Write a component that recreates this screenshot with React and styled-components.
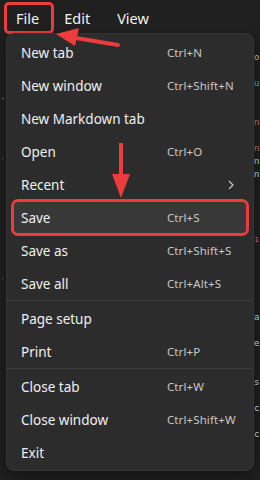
import React from "react";
import styled, { createGlobalStyle } from "styled-components";

const GlobalStyle = createGlobalStyle`
  html, body {
    margin: 0;
    padding: 0;
    background: #1f1f1f;
  }
  body {
    font-family: "Noto Sans", "Open Sans", sans-serif;
  }
`;

const Page = styled.div`
  position: relative;
  width: 260px;
  height: 480px;
  overflow: hidden;
  background: #1f1f1f;
`;

const TopBar = styled.div`
  display: flex;
  align-items: center;
  height: 33px;
  padding-left: 4px;
  background: #202020;
  box-sizing: border-box;
`;

const Tab = styled.div`
  box-sizing: border-box;
  height: 32px;
  display: flex;
  align-items: center;
  padding: ${({ $boxed }) => ($boxed ? "0 12px 0 9px" : "0")};
  margin-right: ${({ $gap }) => $gap}px;
  border: 3px solid ${({ $boxed }) => ($boxed ? "#ee3b3b" : "transparent")};
  border-radius: 5px;
  color: #f2f2f2;
  font-size: 14.5px;
  margin-top: 2px;
`;

const Body = styled.div`
  display: flex;
  justify-content: space-between;
  height: 447px;
`;

const Gutter = styled.div`
  width: ${({ $w }) => $w}px;
  padding-top: ${({ $top }) => $top}px;
  font-family: "DejaVu Sans Mono", monospace;
  font-size: 9px;
  line-height: 13px;
`;

const CodeBit = styled.div`
  white-space: pre;
  height: ${({ $h }) => $h || 13}px;
  color: ${({ $c }) => $c};
`;

const Menu = styled.div`
  position: absolute;
  left: 6px;
  top: 33px;
  width: 248px;
  height: 438px;
  box-sizing: border-box;
  display: flex;
  flex-direction: column;
  padding: 2px 7px;
  background: #2c2c2c;
  border: 1px solid #353535;
  border-radius: 8px;
  box-shadow: 0 4px 12px rgba(0, 0, 0, 0.4);
`;

const Item = styled.div`
  position: relative;
  flex: none;
  display: flex;
  align-items: center;
  height: 31px;
  margin: 1px 0;
  padding: 0 0 0 7px;
  border-radius: 4px;
  background: ${({ $active }) => ($active ? "#383838" : "transparent")};
  box-shadow: ${({ $active }) => ($active ? "0 0 0 3px #ee3b3b" : "none")};
`;

const Label = styled.span`
  width: 146px;
  flex: none;
  color: #f0f0f0;
  font-size: 13.5px;
`;

const Shortcut = styled.span`
  color: #c8c8c8;
  font-size: 11.5px;
  letter-spacing: 0.1px;
`;

const Chevron = styled.svg`
  position: absolute;
  right: 12px;
  top: 11px;
`;

const Separator = styled.div`
  flex: none;
  height: 1px;
  margin: 0 -7px 1px;
  background: #3d3d3d;
`;

const Arrows = styled.svg`
  position: absolute;
  left: 0;
  top: 0;
  pointer-events: none;
`;

const leftBits = [
  ["#ce9178", "·"],
  ["#4e6d8c", "·"],
  ["#d4d4d4", ""],
  ["#4e6d8c", "·"],
];

const rightBits = [
  ["#d7ba7d", "o"],
  ["", ""],
  ["#569cdc", "u"],
  ["", ""],
  ["", ""],
  ["#d16969", "n"],
  ["", ""],
  ["#d16969", "n"],
  ["#9cdcfe", "n"],
  ["#9cdcfe", "n"],
  ["", ""],
  ["", ""],
  ["", ""],
  ["", ""],
  ["#d16969", "ı"],
  ["", ""],
  ["", ""],
  ["", ""],
  ["", ""],
  ["", ""],
  ["#9cdcfe", "a"],
  ["", ""],
  ["#d4d4d4", "e"],
  ["", ""],
  ["", ""],
  ["#d4d4d4", "s"],
  ["", ""],
  ["#d4d4d4", "c"],
  ["", ""],
  ["#d4d4d4", "c"],
];

const items = [
  ["New tab", "Ctrl+N"],
  ["New window", "Ctrl+Shift+N"],
  ["New Markdown tab", ""],
  ["Open", "Ctrl+O"],
  ["Recent", "", "sub"],
  ["Save", "Ctrl+S", "active"],
  ["Save as", "Ctrl+Shift+S"],
  ["Save all", "Ctrl+Alt+S"],
  "sep",
  ["Page setup", ""],
  ["Print", "Ctrl+P"],
  "sep",
  ["Close tab", "Ctrl+W"],
  ["Close window", "Ctrl+Shift+W"],
  ["Exit", ""],
];

export default function App() {
  return (
    <Page>
      <GlobalStyle />
      <TopBar>
        <Tab $boxed $gap={7}>File</Tab>
        <Tab $gap={21}>Edit</Tab>
        <Tab $gap={0}>View</Tab>
      </TopBar>
      <Body>
        <Gutter $w={6} $top={60}>
          {leftBits.map(([c, t], i) => (
            <CodeBit key={i} $c={c} $h={60}>
              {t}
            </CodeBit>
          ))}
        </Gutter>
        <Gutter $w={6} $top={18}>
          {rightBits.map(([c, t], i) => (
            <CodeBit key={i} $c={c}>
              {t}
            </CodeBit>
          ))}
        </Gutter>
      </Body>
      <Menu>
        {items.map((it, i) =>
          it === "sep" ? (
            <Separator key={i} />
          ) : (
            <Item key={i} $active={it[2] === "active"}>
              <Label>{it[0]}</Label>
              <Shortcut>{it[1]}</Shortcut>
              {it[2] === "sub" && (
                <Chevron width="6" height="10" viewBox="0 0 6 10">
                  <path d="M1 1l4 4-4 4" fill="none" stroke="#c8c8c8" strokeWidth="1.2" />
                </Chevron>
              )}
            </Item>
          )
        )}
      </Menu>
      <Arrows width="260" height="480" viewBox="0 0 260 480">
        <line x1="118" y1="45" x2="70" y2="37" stroke="#ee3b3b" strokeWidth="4" strokeLinecap="round" />
        <polygon points="56,34 79,28 75,46" fill="#ee3b3b" />
        <line x1="121" y1="143" x2="121" y2="180" stroke="#ee3b3b" strokeWidth="4" />
        <polygon points="112,174 130,174 121,198" fill="#ee3b3b" />
      </Arrows>
    </Page>
  );
}
